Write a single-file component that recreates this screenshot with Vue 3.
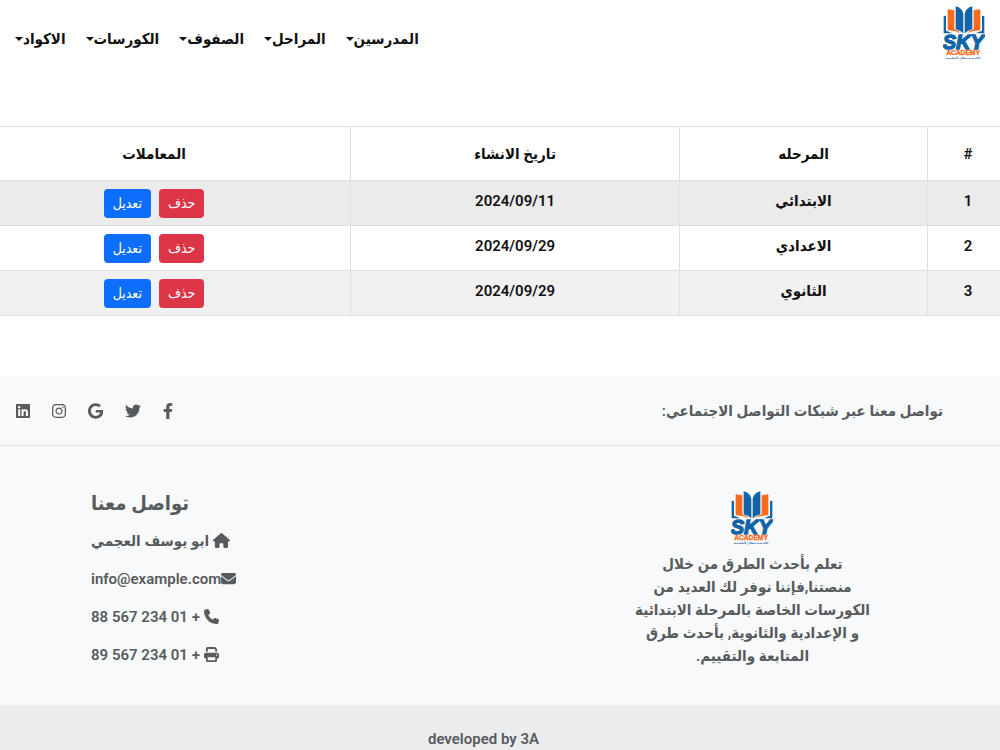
<script setup>
import { ref } from 'vue'

const menuItems = ref([
  { id: 'teachers', label: 'المدرسين' },
  { id: 'stages', label: 'المراحل' },
  { id: 'classes', label: 'الصفوف' },
  { id: 'courses', label: 'الكورسات' },
  { id: 'codes', label: 'الاكواد' },
])

const stages = ref([
  { id: 1, name: 'الابتدائي', createdAt: '2024/09/11' },
  { id: 2, name: 'الاعدادي', createdAt: '2024/09/29' },
  { id: 3, name: 'الثانوي', createdAt: '2024/09/29' },
])

const aboutLines = [
  'تعلم بأحدث الطرق من خلال',
  'منصتنا,فإننا نوفر لك العديد من',
  'الكورسات الخاصة بالمرحلة الابتدائية',
  'و الإعدادية والثانوية, بأحدث طرق',
  'المتابعة والتقييم.',
]

const socials = [
  {
    id: 'facebook',
    box: '0 0 320 512',
    path: 'M279.14 288l14.22-92.66h-88.91v-60.13c0-25.35 12.42-50.06 52.24-50.06h40.42V6.26S260.43 0 225.36 0c-73.22 0-121.08 44.38-121.08 124.72v70.62H22.89V288h81.39v224h100.17V288z',
  },
  {
    id: 'twitter',
    box: '0 0 512 512',
    path: 'M459.37 151.716c.325 4.548.325 9.097.325 13.645 0 138.72-105.583 298.558-298.558 298.558-59.452 0-114.68-17.219-161.137-47.106 8.447.974 16.568 1.299 25.34 1.299 49.055 0 94.213-16.568 130.274-44.832-46.132-.975-84.792-31.188-98.112-72.772 6.498.974 12.995 1.624 19.818 1.624 9.421 0 18.843-1.3 27.614-3.573-48.081-9.747-84.143-51.98-84.143-102.985v-1.299c13.969 7.797 30.214 12.67 47.431 13.319-28.264-18.843-46.781-51.005-46.781-87.391 0-19.492 5.197-37.36 14.294-52.954 51.655 63.675 129.3 105.258 216.365 109.807-1.624-7.797-2.599-15.918-2.599-24.04 0-57.828 46.782-104.934 104.934-104.934 30.213 0 57.502 12.67 76.67 33.137 23.715-4.548 46.456-13.32 66.599-25.34-7.798 24.366-24.366 44.833-46.132 57.827 21.117-2.273 41.584-8.122 60.426-16.243-14.292 20.791-32.161 39.308-52.628 54.253z',
  },
  {
    id: 'google',
    box: '0 0 488 512',
    path: 'M488 261.8C488 403.3 391.1 504 248 504 110.8 504 0 393.2 0 256S110.8 8 248 8c66.8 0 123 24.5 166.3 64.9l-67.5 64.9C258.5 52.6 94.3 116.6 94.3 256c0 86.5 69.1 156.6 153.7 156.6 98.2 0 135-70.4 140.8-106.9H248v-85.3h236.1c2.3 12.7 3.9 24.9 3.9 41.4z',
  },
  {
    id: 'instagram',
    box: '0 0 448 512',
    path: 'M224.1 141c-63.6 0-114.9 51.3-114.9 114.9s51.3 114.9 114.9 114.9S339 319.5 339 255.9 287.7 141 224.1 141zm0 189.6c-41.1 0-74.7-33.5-74.7-74.7s33.5-74.7 74.7-74.7 74.7 33.5 74.7 74.7-33.6 74.7-74.7 74.7zm146.4-194.3c0 14.9-12 26.8-26.8 26.8-14.9 0-26.8-12-26.8-26.8s12-26.8 26.8-26.8 26.8 12 26.8 26.8zm76.1 27.2c-1.7-35.9-9.9-67.7-36.2-93.9-26.2-26.2-58-34.4-93.9-36.2-37-2.1-147.9-2.1-184.9 0-35.8 1.7-67.6 9.9-93.9 36.1s-34.4 58-36.2 93.9c-2.1 37-2.1 147.9 0 184.9 1.7 35.9 9.9 67.7 36.2 93.9s58 34.4 93.9 36.2c37 2.1 147.9 2.1 184.9 0 35.9-1.7 67.7-9.9 93.9-36.2 26.2-26.2 34.4-58 36.2-93.9 2.1-37 2.1-147.8 0-184.8zM398.8 388c-7.8 19.6-22.9 34.7-42.6 42.6-29.5 11.7-99.5 9-132.1 9s-102.7 2.6-132.1-9c-19.6-7.8-34.7-22.9-42.6-42.6-11.7-29.5-9-99.5-9-132.1s-2.6-102.7 9-132.1c7.8-19.6 22.9-34.7 42.6-42.6 29.5-11.7 99.5-9 132.1-9s102.7-2.6 132.1 9c19.6 7.8 34.7 22.9 42.6 42.6 11.7 29.5 9 99.5 9 132.1s2.7 102.7-9 132.1z',
  },
  {
    id: 'linkedin',
    box: '0 0 448 512',
    path: 'M416 32H31.9C14.3 32 0 46.5 0 64.3v383.4C0 465.5 14.3 480 31.9 480H416c17.6 0 32-14.5 32-32.3V64.3c0-17.8-14.4-32.3-32-32.3zM135.4 416H69V202.2h66.5V416zm-33.2-243c-21.3 0-38.5-17.3-38.5-38.5S80.9 96 102.2 96c21.2 0 38.5 17.3 38.5 38.5 0 21.3-17.2 38.5-38.5 38.5zm282.1 243h-66.4V312c0-24.8-.5-56.7-34.5-56.7-34.6 0-39.9 27-39.9 54.9V416h-66.4V202.2h63.7v29.2h.9c8.9-16.8 30.6-34.5 62.9-34.5 67.2 0 79.7 44.3 79.7 101.9V416z',
  },
]

const contacts = [
  {
    id: 'address',
    text: ' ابو يوسف العجمي',
    box: '0 0 576 512',
    path: 'M575.8 255.5c0 18-15 32.1-32 32.1h-32l.7 160.2c0 2.7-.2 5.4-.5 8.1V472c0 22.1-17.9 40-40 40H456c-1.1 0-2.2 0-3.3-.1c-1.4 .1-2.8 .1-4.2 .1H416 392c-22.1 0-40-17.9-40-40V448 384c0-17.7-14.3-32-32-32H256c-17.7 0-32 14.3-32 32v64 24c0 22.1-17.9 40-40 40H160 128.1c-1.5 0-3-.1-4.5-.2c-1.2 .1-2.4 .2-3.6 .2H104c-22.1 0-40-17.9-40-40V360c0-.9 0-1.9 .1-2.8V287.6H32c-18 0-32-14-32-32.1c0-9 3-17 10-24L266.4 8c7-7 15-8 22-8s15 2 21 7L564.8 231.5c8 7 12 15 11 24z',
  },
  {
    id: 'email',
    text: 'info@example.com',
    box: '0 0 512 512',
    path: 'M48 64C21.5 64 0 85.5 0 112c0 15.1 7.1 29.3 19.2 38.4L236.8 313.6c11.4 8.5 27 8.5 38.4 0L492.8 150.4c12.1-9.1 19.2-23.3 19.2-38.4c0-26.5-21.5-48-48-48H48zM0 176V384c0 35.3 28.7 64 64 64H448c35.3 0 64-28.7 64-64V176L294.4 339.2c-22.8 17.1-54 17.1-76.8 0L0 176z',
  },
  {
    id: 'phone',
    text: ' + 01 234 567 88',
    box: '0 0 512 512',
    path: 'M164.9 24.6c-7.7-18.6-28-28.5-47.4-23.2l-88 24C12.1 30.2 0 46 0 64C0 311.4 200.6 512 448 512c18 0 33.8-12.1 38.6-29.5l24-88c5.3-19.4-4.6-39.7-23.2-47.4l-96-40c-16.3-6.8-35.2-2.1-46.3 11.6L304.7 368C234.3 334.7 177.3 277.7 144 207.3L193.3 167c13.7-11.2 18.4-30 11.6-46.3l-40-96z',
  },
  {
    id: 'fax',
    text: ' + 01 234 567 89',
    box: '0 0 512 512',
    path: 'M128 0C92.7 0 64 28.7 64 64v96h64V64H354.7L384 93.3V160h64V93.3c0-17-6.7-33.3-18.7-45.3L400 18.7C388 6.7 371.7 0 354.7 0H128zM384 352v32 64H128V384 368 352H384zm64 32h32c17.7 0 32-14.3 32-32V256c0-35.3-28.7-64-64-64H64c-35.3 0-64 28.7-64 64v96c0 17.7 14.3 32 32 32H64v64c0 35.3 28.7 64 64 64H384c35.3 0 64-28.7 64-64V384zM432 248a24 24 0 1 1 0 48 24 24 0 1 1 0-48z',
  },
]
</script>

<template>
  <div class="page" dir="rtl">
    <header class="navbar">
      <a href="#" class="navbar__brand">
        <svg class="logo" viewBox="0 0 126 162">
          <g id="sky-logo">
            <g fill="#1264a8">
              <path d="M2 30 9 29V74L28 82H2z" />
              <path d="M124 30 117 29V74L98 82H124z" />
              <path d="M38 1Q58 6 61 24V82Q54 74 38 70z" />
              <path d="M88 1Q68 6 65 24V82Q72 74 88 70z" />
            </g>
            <g fill="#f96a1b">
              <path d="M14 10 34 13V70Q46 73 54 81Q36 73 14 73z" />
              <path d="M112 10 92 13V70Q80 73 72 81Q90 73 112 73z" />
            </g>
            <text x="61" y="128" class="logo-name">SKY</text>
            <text x="60" y="148" class="logo-sub">ACADEMY</text>
            <text x="60" y="158" class="logo-tag">اكاديمية سكاي التعليمية</text>
          </g>
        </svg>
      </a>
      <nav class="navbar__menu">
        <a v-for="item in menuItems" :key="item.id" href="#" class="navbar__link">{{ item.label }}</a>
      </nav>
    </header>

    <main class="stages">
      <table class="stages__table">
        <thead>
          <tr>
            <th class="col-index">#</th>
            <th class="col-name">المرحله</th>
            <th class="col-date">تاريخ الانشاء</th>
            <th class="col-actions">المعاملات</th>
          </tr>
        </thead>
        <tbody>
          <tr v-for="stage in stages" :key="stage.id">
            <td>{{ stage.id }}</td>
            <td>{{ stage.name }}</td>
            <td>{{ stage.createdAt }}</td>
            <td>
              <div class="actions">
                <button type="button" class="btn btn--danger">حذف</button>
                <button type="button" class="btn btn--primary">تعديل</button>
              </div>
            </td>
          </tr>
        </tbody>
      </table>
    </main>

    <footer class="footer">
      <section class="footer__social">
        <span>تواصل معنا عبر شبكات التواصل الاجتماعي:</span>
        <div class="footer__icons">
          <a v-for="item in socials" :key="item.id" href="#" :aria-label="item.id">
            <svg class="icon" :viewBox="item.box"><path :d="item.path" /></svg>
          </a>
        </div>
      </section>

      <section class="footer__body">
        <div class="about">
          <svg class="logo" viewBox="0 0 126 162"><use href="#sky-logo" /></svg>
          <p class="about__text">
            <span v-for="line in aboutLines" :key="line">{{ line }}</span>
          </p>
        </div>
        <div class="contact">
          <h6 class="contact__title">تواصل معنا</h6>
          <p v-for="item in contacts" :key="item.id" class="contact__row">
            <svg class="icon" :viewBox="item.box"><path :d="item.path" /></svg><span>{{ item.text }}</span>
          </p>
        </div>
      </section>

      <div class="footer__copy">developed by 3A</div>
    </footer>
  </div>
</template>

<style>
body {
  margin: 0;
  background: #fff;
}
</style>

<style scoped>
.page {
  overflow: hidden;
  font-family: Roboto, 'DejaVu Sans Condensed', 'DejaVu Sans', sans-serif;
  font-size: 15px;
  font-weight: 600;
  line-height: 24px;
  color: #111;
}

.page a {
  color: inherit;
  text-decoration: none;
}

.logo {
  display: block;
  width: 42px;
  height: 54px;
}

.logo-name,
.logo-sub,
.logo-tag {
  font-family: 'Liberation Sans', 'DejaVu Sans', sans-serif;
  font-weight: 700;
  text-anchor: middle;
  fill: #1264a8;
}

.logo-name {
  font-size: 60px;
  font-style: italic;
  stroke: #1264a8;
  stroke-width: 4px;
}

.logo-sub {
  font-size: 20px;
  fill: #f96a1b;
  stroke: #f96a1b;
  stroke-width: 1px;
}

.logo-tag {
  font-size: 9px;
}

.navbar {
  display: flex;
  align-items: center;
  justify-content: space-between;
  padding: 6px 15px 18px;
}

.navbar__menu {
  display: flex;
  gap: 20px;
  padding-top: 12px;
}

.navbar__link {
  display: flex;
  align-items: center;
}

.navbar__link::after {
  content: '';
  border-top: 4px solid;
  border-inline: 4px solid transparent;
}

/* the table is wider than the viewport on both sides */
.stages {
  margin: 48px -9px 61px -43px;
}

.stages__table {
  width: 100%;
  table-layout: fixed;
  border-collapse: collapse;
  text-align: center;
}

.stages__table th,
.stages__table td {
  box-sizing: border-box;
  border: 1px solid #dee2e6;
  padding: 8px 8px 7px;
  vertical-align: top;
}

.stages__table th {
  padding: 15px 8px 14px;
  font-weight: 600;
}

.stages__table .col-index {
  width: 7.7%;
}

.stages__table .col-name {
  width: 23.6%;
}

.stages__table .col-date {
  width: 31.3%;
}

.stages__table .col-actions {
  width: 37.4%;
}

.stages__table tbody tr:nth-child(odd) {
  background: #f1f1f1;
}

.stages__table tbody tr:first-child {
  background: #ebebeb;
}

.actions {
  display: flex;
  justify-content: center;
  gap: 8px;
}

.btn {
  border: 0;
  border-radius: 4px;
  padding: 4px 9px;
  font-family: inherit;
  font-size: 14px;
  font-weight: 400;
  line-height: 21px;
  color: #fff;
  cursor: pointer;
}

.btn--danger {
  background: #dc3545;
}

.btn--primary {
  background: #0d6efd;
}

.footer {
  background: #f8f9fa;
  color: #575b5e;
}

.icon {
  height: 16px;
  fill: currentColor;
}

.footer__social {
  display: flex;
  align-items: center;
  justify-content: space-between;
  padding: 22px 57px 22px 16px;
  border-bottom: 1px solid #dee2e6;
}

.footer__icons {
  display: flex;
  gap: 22px;
}

.footer__icons .icon {
  display: block;
}

.footer__body {
  display: flex;
  justify-content: space-between;
  padding: 45px 130px 24px 91px;
}

.about {
  display: flex;
  flex-direction: column;
  align-items: center;
}

.about__text {
  margin: 8px 0 0;
  line-height: 23px;
  text-align: center;
}

.about__text span {
  display: block;
  white-space: nowrap;
}

.contact {
  text-align: left;
}

.contact__title {
  margin: 0 0 14px;
  font-size: 20px;
  font-weight: 600;
  line-height: 24px;
}

.contact__row {
  margin: 0 0 14px;
  white-space: pre;
}

.contact__row .icon {
  height: 15px;
  vertical-align: -2px;
}

.footer__copy {
  padding: 22px 33px 24px 0;
  background: #ebeced;
  text-align: center;
}
</style>
